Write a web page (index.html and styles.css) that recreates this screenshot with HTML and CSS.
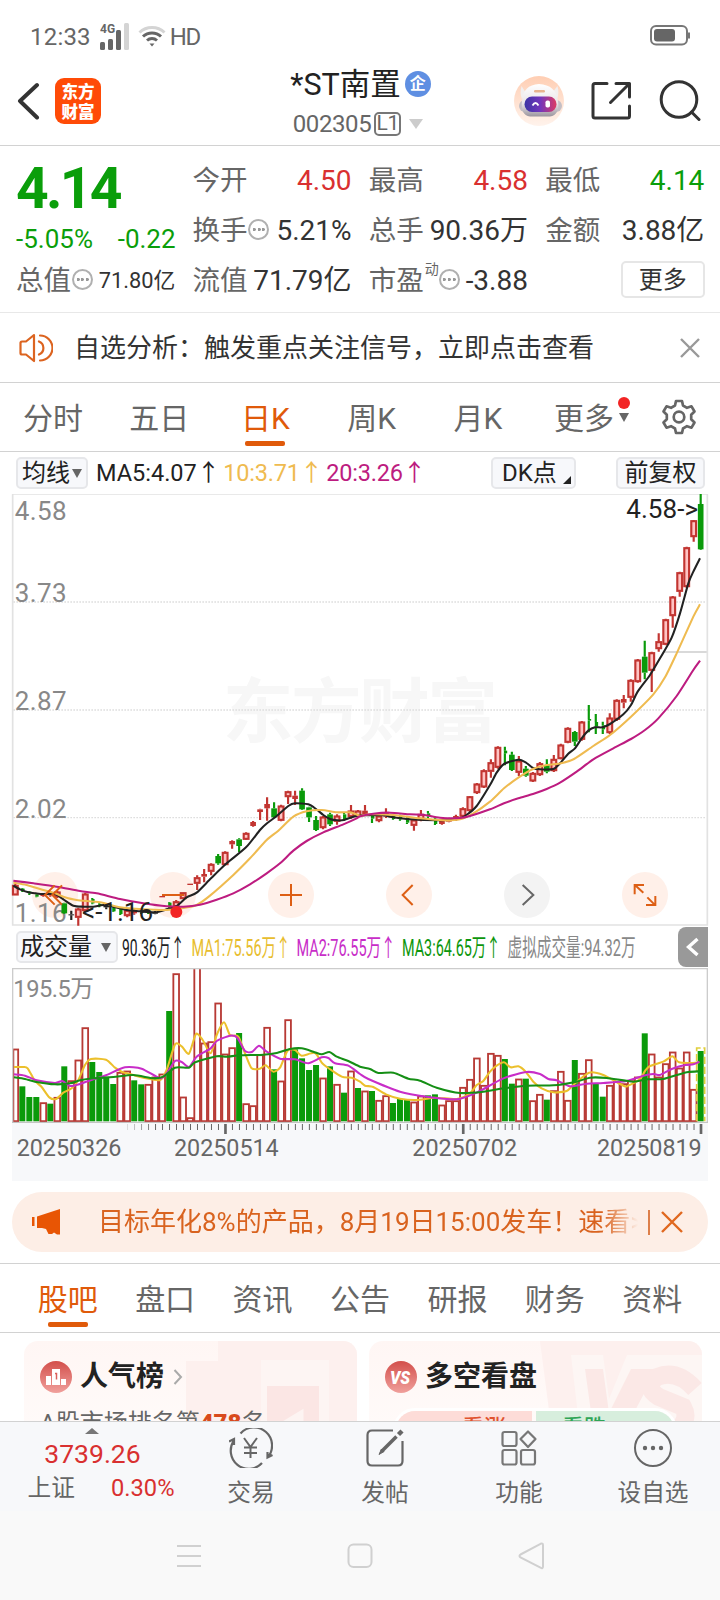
FILE: index.html
```html
<!DOCTYPE html>
<html lang="zh-CN">
<head>
<meta charset="utf-8">
<title>*ST南置 002305</title>
<link rel="stylesheet" href="styles.css">
</head>
<body>
<div class="phone">
  <div class="status">
    <span class="clock">12:33</span>
    <svg class="signal" width="30" height="30" viewBox="0 0 30 30"><text x="0" y="11" class="net">4G</text><g fill="#666"><rect x="0" y="20" width="5" height="8" rx="1.5"/><rect x="8" y="17" width="5" height="11" rx="1.5"/><rect x="16" y="8" width="5" height="20" rx="1.5"/><rect x="24" y="1" width="5" height="27" rx="1.5" fill="#d4d4d4"/></g></svg>
    <svg class="wifi" width="28" height="24" viewBox="0 0 28 24" fill="none" stroke="#666" stroke-width="3"><path d="M1.500 8.500A18 18 0 0 1 26.500 8.500" stroke="#d4d4d4"/><path d="M5 12.500A13 13 0 0 1 23 12.500"/><path d="M9 16.500A7.500 7.500 0 0 1 19 16.500"/><path d="M11.500 19.500h5L14 22.500z" fill="#666" stroke="none"/></svg>
    <span class="hd">HD</span>
    <svg class="battery" width="40" height="22" viewBox="0 0 40 22"><rect x="1" y="1" width="36" height="18.500" rx="5" fill="none" stroke="#777" stroke-width="2"/><rect x="4" y="4" width="21" height="12.500" rx="3" fill="#666"/><rect x="38" y="7.500" width="2" height="6" fill="#777"/></svg>
  </div>

  <header class="header">
    <svg class="back" width="24" height="38" viewBox="0 0 24 38"><path d="M20 3L3 19L20 35.500" fill="none" stroke="#333" stroke-width="4" stroke-linecap="round" stroke-linejoin="round"/></svg>
    <div class="logo"><span>东方</span><span>财富</span></div>
    <div class="title">
      <div class="name">*ST南置<i class="corp">企</i></div>
      <div class="code">002305<span class="level">L1</span><svg width="14" height="10" viewBox="0 0 14 10"><path d="M0 0h14L7 10z" fill="#ccc"/></svg></div>
    </div>
    <svg class="robot" width="50" height="50" viewBox="0 0 50 50">
      <defs>
        <linearGradient id="peach" x1="0" y1="0" x2="0" y2="1"><stop offset="0" stop-color="#ffceb3"/><stop offset="1" stop-color="#fff3ec"/></linearGradient>
        <linearGradient id="visor"><stop offset="0" stop-color="#3b35a5"/><stop offset=".5" stop-color="#7436bb"/><stop offset="1" stop-color="#dd3b64"/></linearGradient>
        <linearGradient id="shell" x1="0" y1="0" x2="0" y2="1"><stop offset="0" stop-color="#fff"/><stop offset=".6" stop-color="#e9e5e8"/><stop offset="1" stop-color="#9b959e"/></linearGradient>
      </defs>
      <circle cx="25" cy="25" r="25" fill="url(#peach)"/>
      <path d="M12 17L7.500 10Q5.500 18 8 23zM38 17L43.500 10Q45.500 18 43 23z" fill="#f2efef"/>
      <rect x="5" y="24" width="43" height="12" rx="6" fill="#c4bfc5"/>
      <path d="M8 25Q9 9 25 8Q42 9 44 25Q46 39 36 40.500H16Q6 39 8 25z" fill="url(#shell)"/>
      <rect x="20" y="14" width="11" height="2.500" rx="1.200" fill="#e8b48f"/>
      <rect x="10.500" y="20.500" width="32" height="15.500" rx="7.500" fill="url(#visor)"/>
      <path d="M18.500 29.500q3-5 6 0" fill="none" stroke="#fff" stroke-width="1.800"/><rect x="31.500" y="24.500" width="4.500" height="7" rx="1.800" fill="#fff"/>
    </svg>
    <svg class="share" width="42" height="42" viewBox="0 0 42 42" fill="none" stroke="#333" stroke-width="3" stroke-linecap="round" stroke-linejoin="round"><path d="M17 3.500H5Q3 3.500 3 5.500V36Q3 38 5 38H37.500Q39.500 38 39.500 36V26M26 3.500H39.500V17M39 4L20.500 22.500"/></svg>
    <svg class="search" width="42" height="42" viewBox="0 0 42 42" fill="none" stroke="#333" stroke-width="3" stroke-linecap="round"><circle cx="20" cy="19.500" r="17.800"/><path d="M32.500 32L40 39.500"/></svg>
  </header>

  <section class="quote">
    <div class="col first">
      <div class="price">4.14</div>
      <div class="change"><span>-5.05%</span><span>-0.22</span></div>
      <div class="kv small"><span>总值<i class="dots"></i></span><b>71.80亿</b></div>
    </div>
    <div class="col">
      <div class="kv"><span>今开</span><b class="up">4.50</b></div>
      <div class="kv"><span>换手<i class="dots"></i></span><b>5.21%</b></div>
      <div class="kv"><span>流值</span><b>71.79亿</b></div>
    </div>
    <div class="col">
      <div class="kv"><span>最高</span><b class="up">4.58</b></div>
      <div class="kv"><span>总手</span><b>90.36万</b></div>
      <div class="kv"><span>市盈<sup>动</sup><i class="dots"></i></span><b>-3.88</b></div>
    </div>
    <div class="col">
      <div class="kv"><span>最低</span><b class="down">4.14</b></div>
      <div class="kv"><span>金额</span><b>3.88亿</b></div>
      <div class="kv end"><button class="more">更多</button></div>
    </div>
  </section>

  <section class="notice">
    <svg width="36" height="30" viewBox="0 0 36 30" fill="none" stroke="#dc6420" stroke-width="2.200" stroke-linecap="round" stroke-linejoin="round"><path d="M17 2L9 8.500H5Q3.500 8.500 3.500 10V20Q3.500 21.500 5 21.500H9L17 28zM22 8.500A7 7 0 0 1 22 21.500M23 2.500A12.500 12.500 0 0 1 23 27.500"/></svg>
    <span>自选分析：触发重点关注信号，立即点击查看</span>
    <svg class="close" width="20" height="20" viewBox="0 0 20 20"><path d="M1 1L19 19M19 1L1 19" stroke="#999" stroke-width="2.400"/></svg>
  </section>

  <nav class="periods">
    <span>分时</span><span>五日</span><span class="on">日K</span><span>周K</span><span>月K</span>
    <span class="morep">更多<i class="caret"></i><i class="dot"></i></span>
    <svg width="36" height="36" viewBox="0 0 36 36" fill="none" stroke="#666" stroke-width="2.700" stroke-linejoin="round"><path d="M15 2H21L22 6.500L26 8.800L30.500 7.300L33.500 12.500L30.200 15.800V20.200L33.500 23.500L30.500 28.700L26 27.200L22 29.500L21 34H15L14 29.500L10 27.200L5.500 28.700L2.500 23.500L5.800 20.200V15.800L2.500 12.500L5.500 7.300L10 8.800L14 6.500Z"/><circle cx="18" cy="18" r="5.300"/></svg>
  </nav>

  <div class="legend">
    <span class="chip ma">均线<i></i></span>
    <span class="m5">MA5:4.07<em>↑</em></span>
    <span class="m10">10:3.71<em>↑</em></span>
    <span class="m20">20:3.26<em>↑</em></span>
    <span class="chip dk">DK点<i></i></span>
    <span class="chip fq">前复权</span>
  </div>
  <svg class="kline" viewBox="0 42 2160 1296" id="kline"></svg>
  <div class="vlegend">
    <span class="chip vol">成交量<i></i></span>
    <svg width="520" height="42" viewBox="0 0 520 42" class="vtext">
      <text transform="translate(4 29.500) scale(.578 1)" fill="#222">90.36万↑</text>
      <text transform="translate(73.500 29.500) scale(.603 1)" fill="#e8bd2e">MA1:75.56万↑</text>
      <text transform="translate(178.500 29.500) scale(.603 1)" fill="#c82dc8">MA2:76.55万↑</text>
      <text transform="translate(284 29.500) scale(.6 1)" fill="#0c960c">MA3:64.65万↑</text>
      <text transform="translate(389.500 29.500) scale(.61 1)" fill="#888">虚拟成交量:94.32万</text>
    </svg>
    <span class="fold"><svg width="14" height="20" viewBox="0 0 14 20"><path d="M11.500 2L2.500 10L11.500 18" fill="none" stroke="#fff" stroke-width="3.400"/></svg></span>
  </div>
  <svg class="volume" viewBox="0 129 2160 639" id="volume"></svg>

  <div class="promo">
    <svg width="32" height="28" viewBox="0 0 32 28" fill="#e85504"><rect x="0" y="9" width="2.500" height="9"/><path d="M5 8.500L28 1V26.500H25L22 24.500L20 26H16.500L14 21L10 20H5z"/></svg>
    <span class="ptext">目标年化8%的产品，8月19日15:00发车！速看&gt;</span>
    <i class="bar"></i>
    <svg width="22" height="22" viewBox="0 0 22 22"><path d="M1 1L21 21M21 1L1 21" stroke="#e0681f" stroke-width="2.400"/></svg>
  </div>

  <nav class="tabs"><span class="on">股吧</span><span>盘口</span><span>资讯</span><span>公告</span><span>研报</span><span>财务</span><span>资料</span></nav>

  <section class="cards">
    <div class="card">
      <svg class="deco" width="333" height="100" viewBox="0 0 333 100"><path d="M194 0H333V100H162V20H194z" fill="#fdf0ee"/><path d="M237 19H305V100H199V84H237z" fill="#fdf5f3"/><path d="M243 45H295V100H207V86H243z" fill="#fbe6e4"/><path d="M256 86L276 74V100" fill="none" stroke="#fdf4f2" stroke-width="7"/></svg>
      <div class="chead"><svg width="32" height="32" viewBox="0 0 32 32"><circle cx="16" cy="16" r="16" fill="url(#red)"/><path d="M6 15h5v9H6zM12 8h8v16h-8zM21 18h5v6h-5z" fill="#fff"/><path d="M15 12.500h1.500v6" stroke="#d9605c" stroke-width="1.500" fill="none"/></svg>人气榜<svg class="chev" width="10" height="16" viewBox="0 0 10 16"><path d="M1.500 1L8 8L1.500 15" fill="none" stroke="#aaa" stroke-width="2"/></svg></div>
      <div class="rank">A股市场排名第<b>478</b>名</div>
    </div>
    <div class="card">
      <svg class="deco" width="333" height="100" viewBox="0 0 333 100"><path d="M171 0H333V100H184z" fill="#fdf0ee"/><path d="M202 14H234L240 58L258 14H333V100H212z" fill="#fdf6f4"/><path d="M216 28H234L240 72L262 28H288L250 100H226z" fill="#fbe8e6"/><path d="M326 48Q308 28 288 36Q274 46 290 56L314 66Q322 80 304 92" fill="none" stroke="#fbe8e6" stroke-width="18"/></svg>
      <div class="chead"><svg width="32" height="32" viewBox="0 0 32 32"><defs><linearGradient id="red" x1="0" y1="0" x2="0" y2="1"><stop offset="0" stop-color="#d34f4b"/><stop offset="1" stop-color="#f0a09c"/></linearGradient></defs><circle cx="16" cy="16" r="16" fill="url(#red)"/><text transform="translate(15 23) scale(.85 1)" text-anchor="middle" class="vs">VS</text></svg>多空看盘</div>
      <div class="vote"><span class="bull">看涨</span><span class="bear">看跌</span></div>
    </div>
  </section>

  <footer class="bottom">
    <div class="index">
      <svg width="14" height="6" viewBox="0 0 14 6"><path d="M7 0L14 6H0z" fill="#777"/></svg>
      <div class="ival">3739.26</div>
      <div class="irow"><span>上证</span><b>0.30%</b></div>
    </div>
    <div class="act"><svg width="44" height="40" viewBox="0 0 44 40" fill="none" stroke="#666" stroke-width="2.200"><path d="M11.500 5.500A18 18 0 0 1 38.500 29.500M43.500 27L38.500 29.500V24"/><path d="M33 35A18 18 0 0 1 5 12.500M0 13.500L5 11V17"/><path d="M15 10L21.500 19L28 10M21.500 19V30M15 19.500H28M15 25H28" stroke-width="2"/></svg>交易</div>
    <div class="act"><svg width="40" height="40" viewBox="0 0 40 40" fill="none" stroke="#666" stroke-width="2.200"><path d="M28 2.500H7Q2.500 2.500 2.500 7V33Q2.500 37.500 7 37.500H33Q37.500 37.500 37.500 33V13"/><path d="M16.500 23.500L31.500 8.500" stroke-width="3.600"/><path d="M33.500 6.500L37 3" stroke-width="4.500"/><path d="M14 26.500L19 23.500L16.500 21z" fill="#666" stroke-width="1"/></svg>发帖</div>
    <div class="act"><svg width="40" height="40" viewBox="0 0 40 40" fill="none" stroke="#777" stroke-width="2.200" stroke-linejoin="round"><rect x="3.500" y="4" width="14" height="14" rx="2"/><rect x="3.500" y="22" width="14" height="14.500" rx="2"/><rect x="22" y="22" width="14" height="14.500" rx="2"/><path d="M29 3.500L36.500 11L29 19L21.500 11z"/></svg>功能</div>
    <div class="act"><svg width="40" height="40" viewBox="0 0 40 40" fill="none" stroke="#666" stroke-width="2"><circle cx="20" cy="20" r="18"/><g fill="#666" stroke="none"><circle cx="12" cy="20" r="2.200"/><circle cx="20" cy="20" r="2.200"/><circle cx="28" cy="20" r="2.200"/></g></svg>设自选</div>
  </footer>
  <div class="sysnav">
    <svg width="26" height="28" viewBox="0 0 26 28"><path d="M1 4H25M1 14H25M1 24H25" stroke="#d0d0d0" stroke-width="2"/></svg>
    <svg width="26" height="28" viewBox="0 0 26 28"><rect x="1.500" y="2.500" width="23" height="22.500" rx="5" fill="none" stroke="#d0d0d0" stroke-width="2"/></svg>
    <svg width="28" height="28" viewBox="0 0 28 28"><path d="M2.500 12.500L22.500 1.800Q25 1 25 3V24.500Q25 27 22.500 25.700L2.500 15.500Q0.500 14 2.500 12.500z" fill="none" stroke="#d0d0d0" stroke-width="2"/></svg>
  </div>
</div>
<script src="chart.js"></script>
</body>
</html>
```
FILE: styles.css
```css
* { box-sizing: border-box; }
body { margin: 0; background: #fff; color: #222; font-family: Roboto, "Noto Sans CJK SC", sans-serif; line-height: 1; }
.phone { width: 720px; height: 1600px; overflow: hidden; display: flex; flex-direction: column; white-space: nowrap; }
.phone > * { flex: none; }
i, em { font-style: normal; }
svg { display: block; flex: none; }

.status { height: 62px; padding: 12px 30px 0; display: flex; align-items: center; color: #666; font-size: 24px; }
.clock { letter-spacing: .2px; }
.signal { margin-left: 9px; }
.net { font: 700 12px Roboto, sans-serif; fill: #666; }
.wifi { margin: -2px 0 0 8px; }
.hd { margin-left: 4px; font-size: 24px; letter-spacing: -1.300px; }
.battery { margin: -3px 0 0 auto; }

.header { height: 84px; border-bottom: 1px solid #d2d2d2; display: flex; align-items: center; padding: 0 20px 0 17px; }
.back { margin-top: -6px; }
.logo { width: 46px; height: 46px; margin: -6px 0 0 14px; border-radius: 9px; background: #ff4b07; color: #fff; font: 900 16.500px/20px "Noto Sans CJK SC", sans-serif; display: flex; flex-direction: column; justify-content: center; align-items: center; }
.title { width: 414px; display: flex; flex-direction: column; align-items: center; gap: 6px; padding: 0 0 4px 98px; }
.name { display: flex; align-items: center; font-size: 30.500px; height: 38px; margin-left: 7px; }
.corp { width: 26px; height: 26px; margin: 0 0 3px 4px; border-radius: 50%; background: #5f8fe2; color: #fff; font-size: 16px; font-weight: 700; display: flex; align-items: center; justify-content: center; }
.code { display: flex; align-items: center; font-size: 24px; height: 26px; color: #666; margin-left: 2px; letter-spacing: -.4px; }
.level { border: 2px solid #777; border-radius: 5px; height: 24px; width: 27px; font-size: 21px; display: flex; align-items: center; justify-content: center; margin: 0 8px 0 3px; }
.robot { margin-top: -6px; margin-left: -1px; }
.share { margin: -6px 0 0 26px; }
.search { margin: -6px -4px 0 27px; }

.quote { height: 167px; border-bottom: 1px solid #e8e8e8; display: grid; grid-template-columns: repeat(4, 158.600px); gap: 17.800px; padding: 10px 16px 0; }
.kv { height: 50px; display: flex; justify-content: space-between; align-items: center; font-size: 28px; color: #666; }
.kv span { display: flex; align-items: center; font-size: 27.500px; }
.kv b { font-weight: 400; color: #333; margin-right: -.6px; }
.kv .up { color: #d93030; }
.kv .down, .price, .change { color: #0a9e0a; }
.kv.end { justify-content: flex-end; }
.kv.small b { font-size: 21.800px; }
.kv sup { font-size: 14px; align-self: flex-start; margin: -5px -1px 0 1px; line-height: 1; }
.dots { width: 21px; height: 21px; margin: -3px 0 0 1px; border: 2px solid #b0b0b0; border-radius: 50%; background: radial-gradient(circle, #999 1.3px, transparent 1.8px) 50% 50% / 4.6px 15px no-repeat, radial-gradient(circle, #999 1.3px, transparent 1.8px) 1.5px 50% / 4.6px 15px no-repeat, radial-gradient(circle, #999 1.3px, transparent 1.8px) 11px 50% / 4.6px 15px no-repeat; }
.price { font-size: 57px; font-weight: 700; height: 66px; line-height: 68px; letter-spacing: -2.700px; margin-top: -1px; }
.change { height: 34px; display: flex; justify-content: space-between; align-items: center; font-size: 26px; margin: 1px -1px 0 0; }
.more { width: 84px; height: 37px; border: 2px solid #e6e6e6; border-radius: 5px; background: #fff; font: 24px/28px "Noto Sans CJK SC", sans-serif; padding: 0 0 3px; color: #333; margin: -3px -1px 0 0; }

.notice { height: 70px; border-bottom: 1px solid #d2d2d2; display: flex; align-items: center; padding: 0 20px 0 17px; font-size: 26px; color: #333; }
.notice span { margin-left: 21px; }
.close { margin-left: auto; }

.periods { height: 69px; border-bottom: 1px solid #d2d2d2; display: flex; align-items: center; font-size: 30px; color: #666; }
.periods span { width: 106.200px; height: 68px; display: flex; align-items: center; justify-content: center; position: relative; padding-top: 3px; }
.periods svg { margin-left: 24px; }
.periods .on, .tabs .on { color: #e05a0a; }
.on::after { content: ""; position: absolute; bottom: 5px; left: 50%; width: 40px; height: 5px; margin-left: -20px; border-radius: 2px; background: #e05a0a; }
.morep .caret { position: absolute; right: 8px; top: 30px; border: 5px solid transparent; border-top: 9px solid #666; border-bottom: 0; }
.morep .dot { position: absolute; right: 7px; top: 14px; width: 12px; height: 12px; border-radius: 50%; background: #f22424; }

.legend { height: 42px; display: flex; align-items: center; padding: 0 15px 0 16px; font-size: 23.500px; }
.legend em { font-family: "Noto Sans CJK SC", sans-serif; margin: 0 -1px 0 0; }
.chip { height: 32px; border: 2px solid #e6e7ea; border-radius: 5px; background: #f7f8fb; display: flex; align-items: center; font-size: 24px; color: #222; }
.ma { width: 72px; padding-left: 4px; margin-right: 8px; }
.ma i, .vol i { border: 5px solid transparent; border-top: 9px solid #666; border-bottom: 0; margin-left: 2px; }
.m10 { color: #efbb50; margin-left: 4px; letter-spacing: -.2px; }
.m20 { color: #bd1c80; margin-left: 4px; letter-spacing: -.2px; }
.dk { width: 85px; padding-left: 9px; margin-left: auto; position: relative; }
.dk i { position: absolute; right: 3px; bottom: 3px; border-left: 8px solid transparent; border-bottom: 8px solid #222; }
.fq { width: 89px; margin-left: 40px; justify-content: center; }

.kline { width: 720px; height: 432px; }
.kline text, .volume text { font-family: Roboto, "Noto Sans CJK SC", sans-serif; font-size: 78px; }
.kline .mark { font: 700 212px "Noto Sans CJK SC", sans-serif; }
.volume .top { font-size: 71px; }
.volume .date { font-size: 70px; }
.vlegend { height: 42px; display: flex; align-items: center; padding: 0 12px 0 16px; }
.vol { width: 102px; padding-left: 2px; }
.vol i { margin-left: 9px; }
.vtext { font-size: 24px; }
.fold { width: 30px; height: 40px; margin-left: auto; background: #999; border-radius: 8px 0 0 8px; display: flex; align-items: center; justify-content: center; }
.volume { width: 720px; height: 213px; }

.promo { height: 60px; margin: 11px 12px 0; border-radius: 30px; background: #fdeee6; display: flex; align-items: center; padding: 0 25px 0 20px; font-size: 26px; color: #d9631f; }
.ptext { margin-left: 34px; width: 542px; overflow: hidden; line-height: 40px; -webkit-mask-image: linear-gradient(90deg, #000 505px, transparent 540px); }
.bar { width: 2px; height: 25px; background: #dd7f4a; margin: 0 11px 0 9px; }

.tabs { height: 70px; margin-top: 11px; border-top: 1px solid #d2d2d2; border-bottom: 1px solid #d2d2d2; display: flex; padding: 0 19px; font-size: 30px; color: #666; }
.tabs span { width: 97.500px; display: flex; align-items: center; justify-content: center; position: relative; padding-top: 3px; }

.cards { height: 88px; padding: 8px 18px 0 24px; display: flex; gap: 12px; overflow: hidden; }
.card { width: 333px; height: 100px; border-radius: 14px; background: linear-gradient(#fff6f4, #fffbfa); padding: 20px 16px 0; position: relative; overflow: hidden; flex: none; }
.deco { position: absolute; left: 0; top: 0; }
.chead { position: relative; display: flex; align-items: center; height: 32px; gap: 8px; font-size: 28px; font-weight: 700; color: #222; }
.chev { margin-left: 1px; }
.vs { font: italic 900 19px Roboto, sans-serif; fill: #fff; }
.rank { position: relative; margin-top: 18px; font-size: 24px; color: #666; }
.rank b { color: #d94a1c; font-weight: 900; }
.vote { position: relative; display: flex; gap: 4px; height: 44px; margin: 15px 9px 0 8px; border: 3px solid #fff; border-radius: 22px; overflow: hidden; font-size: 22px; font-weight: 500; line-height: 24px; }
.vote span { flex: 1; padding-top: 5px; text-align: center; }
.bull { background: #fddcd8; color: #e0532f; padding-left: 40px; }
.bear { background: #d7eedd; color: #2fa556; padding-right: 42px; }

.bottom { height: 90px; background: #f7f8fa; border-top: 1px solid #d2d2d2; display: flex; font-size: 23.700px; color: #666; }
.index { width: 184px; display: flex; flex-direction: column; align-items: center; padding-top: 6px; }
.ival { font-size: 26.500px; color: #d93030; margin: 5px 0 0 1px; height: 30px; line-height: 30px; }
.irow { display: flex; justify-content: space-between; align-items: center; width: 147px; height: 30px; margin: 5px 0 0 18px; }
.irow b { font-weight: 400; color: #d93030; font-size: 23.700px; }
.act { width: 134px; display: flex; flex-direction: column; align-items: center; padding-top: 6px; gap: 14px; }
.sysnav { height: 89px; background: #f9f9f9; display: flex; justify-content: space-between; align-items: center; padding: 0 174px 0 176px; }
```
FILE: chart.js
```js
// Builds the candlestick chart and the volume chart as SVG markup.
const RED = '#c23531', GREEN = '#0a9a0a', BLACK = '#222';
const X0 = 46, STEP = 20.98;
const cx = i => X0 + i * STEP;

// [bodyTop, bodyBottom, wickTop, wickBottom, colour]
const C = [
[1216,1245,1212,1245,'r'],[1226,1232,1224,1236,'g'],[1235,1240,1233,1245,'g'],[1243,1250,1240,1252,'g'],[1242,1248,1240,1250,'r'],[1240,1246,1234,1250,'r'],[1236,1250,1232,1254,'r'],
[1270,1300,1268,1302,'g'],[1303,1306,1292,1320,'k'],[1287,1312,1283,1337,'r'],[1242,1292,1238,1296,'r'],[1257,1270,1254,1273,'g'],[1272,1278,1270,1282,'g'],[1278,1282,1274,1288,'k'],[1280,1294,1276,1296,'g'],[1286,1302,1284,1305,'g'],
[1291,1307,1285,1312,'r'],[1292,1300,1288,1304,'r'],[1292,1298,1288,1302,'g'],[1292,1299,1288,1302,'g'],[1297,1301,1293,1303,'k'],[1248,1252,1248,1252,'r'],[1268,1280,1266,1284,'g'],[1265,1280,1260,1284,'r'],[1238,1256,1238,1256,'r'],
[1211,1215,1211,1215,'r'],[1193,1210,1186,1230,'r'],[1182,1190,1167,1207,'r'],[1153,1174,1150,1186,'r'],[1128,1150,1122,1154,'g'],[1117,1154,1114,1156,'r'],[1083,1093,1081,1106,'r'],[1078,1098,1075,1116,'g'],[1060,1078,1057,1080,'r'],
[1026,1038,1023,1040,'r'],[988,996,986,1020,'r'],[972,985,952,1022,'r'],[985,1012,967,1014,'g'],[978,1021,974,1024,'r'],[935,950,932,972,'r'],[947,957,932,975,'r'],[932,988,925,990,'g'],[982,1012,980,1026,'g'],[1020,1050,1008,1053,'g'],
[1011,1043,1008,1048,'r'],[1003,1033,998,1038,'g'],[1008,1024,1003,1034,'r'],[1003,1018,998,1022,'g'],[993,1010,975,1016,'r'],[993,1010,990,1014,'r'],[992,1002,975,1005,'r'],[1004,1016,1002,1029,'g'],[1008,1022,1005,1027,'r'],[999,1010,985,1014,'r'],
[1005,1017,1002,1019,'g'],[1008,1018,1004,1022,'g'],[1012,1028,1008,1032,'g'],[1020,1036,1016,1052,'r'],[1003,1020,990,1024,'r'],[1000,1010,993,1020,'g'],[1016,1032,1012,1035,'g'],[1022,1032,1018,1034,'r'],[1018,1025,1014,1027,'r'],[1008,1020,1004,1022,'r'],
[986,1009,982,1012,'r'],[950,992,948,996,'r'],[912,938,909,942,'r'],[872,921,868,924,'r'],[848,874,838,893,'r'],[802,862,799,866,'r'],[812,820,800,856,'g'],[824,870,815,873,'g'],[843,877,828,888,'r'],[866,887,858,890,'g'],
[880,903,876,906,'r'],[851,884,846,888,'r'],[855,875,838,880,'g'],[838,872,825,876,'r'],[795,836,791,838,'r'],[745,787,742,790,'r'],[756,785,753,798,'g'],[726,778,723,782,'r'],[717,722,675,757,'g'],[726,740,702,762,'g'],[736,748,725,762,'g'],
[714,758,700,762,'r'],[661,718,658,723,'r'],[657,668,645,685,'r'],[601,652,598,665,'r'],[540,605,537,608,'r'],[530,578,482,598,'g'],[518,571,515,636,'r'],[485,506,460,515,'r'],[419,493,416,496,'r'],[351,407,348,443,'r'],[278,334,275,350,'r'],[203,320,200,324,'r'],[122,170,120,185,'r'],[72,208,42,210,'g']];

// [top, colour]
const V = [[371,'r'],[484,'g'],[516,'g'],[516,'g'],[532,'r'],[536,'g'],[516,'r'],[424,'g'],[466,'r'],[404,'r'],[307,'r'],[411,'g'],[441,'g'],[455,'g'],[477,'g'],[441,'r'],[437,'r'],[466,'g'],[478,'g'],[477,'r'],[455,'r'],[446,'r'],[258,'g'],[145,'r'],[515,'r'],[577,'r'],[100,'r'],[353,'r'],[349,'r'],[233,'r'],[386,'r'],[367,'r'],[324,'g'],[535,'r'],[541,'r'],[388,'r'],[306,'r'],[433,'g'],[467,'r'],[283,'r'],[373,'g'],[400,'g'],[435,'g'],[420,'g'],[458,'r'],[424,'g'],[477,'r'],[503,'g'],[437,'r'],[489,'g'],
[497,'r'],[498,'g'],[525,'r'],[511,'r'],[534,'g'],[522,'g'],[523,'g'],[530,'r'],[512,'r'],[511,'g'],[508,'g'],[539,'r'],[526,'r'],[526,'r'],[486,'r'],[462,'r'],[398,'r'],[480,'r'],[384,'r'],[390,'r'],[402,'g'],[476,'g'],[461,'r'],[461,'g'],[526,'r'],[507,'r'],[524,'g'],[496,'r'],[438,'r'],[525,'r'],[405,'g'],[444,'r'],[403,'r'],[476,'g'],[515,'g'],[480,'r'],[468,'r'],[475,'r'],[466,'r'],[455,'r'],[325,'g'],[386,'r'],[455,'r'],[415,'r'],[380,'r'],[428,'r'],[380,'r'],[492,'r'],[378,'g']];

const R = (pts) => pts.trim().split(/\s+/).map(p => p.split(',').map(Number));
// Joins a left half and a right half (offset 1080) into one smoothed path.
function curve(left, right, color) {
  const p = R(left).concat(R(right).map(([x, y]) => [x + 1080, y]));
  let d = `M${p[0]}`;
  for (let i = 0; i < p.length - 1; i++) {
    const a = p[i - 1] || p[i], b = p[i], c = p[i + 1], e = p[i + 2] || c, k = 0.12;
    d += `C${b[0] + (c[0] - a[0]) * k},${b[1] + (c[1] - a[1]) * k} ${c[0] - (e[0] - b[0]) * k},${c[1] - (e[1] - b[1]) * k} ${c}`;
  }
  return `<path d="${d}" fill="none" stroke="${color}" stroke-width="6.200" stroke-linejoin="round"/>`;
}

let k = '';
k += `<text class="mark" x="668" y="772" fill="#f7f7f7" textLength="826">东方财富</text>`;
for (const y of [366, 690, 1013]) k += `<path d="M40 ${y}H2118" stroke="#dedede" stroke-width="4" stroke-dasharray="5 4"/>`;
[165, 519, 873, 1227, 1581, 1935].forEach((x, i) => k += `<circle cx="${x}" cy="1245" r="69" fill="${i === 4 ? '#f3f3f3' : '#fff0e9'}"/>`);
k += `<path d="M38 42H2122V1335H38z" fill="none" stroke="#e2e2e2" stroke-width="5"/>`;
[[4.58,121],[3.73,366],[2.87,690],[2.02,1013],[1.16,1325]].forEach(([t, y]) => k += `<text x="44" y="${y}" fill="#888" textLength="156">${t.toFixed(2)}</text>`);
k += `<path d="M1990 516H2120" stroke="#ccc" stroke-width="5"/>`;
C.forEach(([t, b, h, l, c], i) => {
  const x = cx(i), col = c === 'r' ? RED : c === 'g' ? GREEN : BLACK;
  k += `<path d="M${x} ${h}V${t}M${x} ${b}V${l}" stroke="${col}" stroke-width="6.500"/>`;
  if (c === 'r' && b - t > 13) k += `<rect x="${x - 7.2}" y="${t + 1.5}" width="14.400" height="${b - t - 3}" fill="#ffc4c4" stroke="${col}" stroke-width="6.400"/>`;
  else { const w = c === 'g' && b - t < 20 ? 5 : 8.5; k += `<rect x="${x - w + (w === 5 ? 2 : 0)}" y="${t}" width="${w * 2}" height="${b - t}" fill="${col}"/>`; }
});
k += curve('40,1217 60,1228 85,1237 108,1240 130,1242 165,1242 190,1258 220,1277 250,1280 280,1280 310,1275 340,1280 380,1290 420,1294 465,1297 500,1288 530,1278 560,1252 590,1238 633,1195 680,1150 738,1102 780,1050 801,1030 830,1008 865,978 885,970 925,973 948,987 970,1005 990,1017 1011,1021 1032,1020 1060,1010 1080,1006', '30,1006 70,1006 100,1012 150,1018 230,1021 290,1018 315,1008 350,978 390,915 410,878 432,852 475,839 497,847 519,864 540,868 580,867 600,850 624,822 645,805 665,775 685,752 705,742 727,742 750,732 790,703 813,675 833,635 870,585 900,535 935,473 960,400 985,310 1000,275 1020,235', '#222');
k += curve('40,1208 80,1215 130,1230 165,1240 190,1250 230,1260 300,1267 360,1282 430,1288 500,1290 550,1284 590,1275 630,1247 700,1185 750,1135 800,1080 835,1052 880,1010 920,994 965,990 1010,997 1050,997 1080,1007', '30,1003 100,1005 180,1015 250,1021 300,1018 340,1000 390,965 432,925 475,893 519,867 560,855 603,850 642,837 700,798 750,765 813,710 880,643 915,592 950,520 1000,410 1020,373', '#efbb50');
k += curve('40,1202 100,1210 170,1220 240,1233 290,1240 360,1257 430,1270 500,1279 550,1280 600,1274 650,1259 700,1240 750,1213 800,1180 840,1150 880,1112 920,1083 970,1057 1030,1033 1070,1015', '0,1009 40,1001 90,998 150,1003 190,1004 240,1013 300,1014 330,1008 390,988 432,970 475,955 519,942 560,927 600,908 650,875 700,838 760,805 813,777 855,750 895,715 950,648 1000,570 1020,542', '#bd1c80');
k += `<text x="1879" y="113" fill="#222" textLength="215">4.58-&gt;</text><text x="246" y="1322" fill="#222" textLength="213">&lt;-1.16</text>`;
k += `<circle cx="529" cy="1296" r="18" fill="#f22424"/>`;
k += `<g fill="none" stroke="#dd5f15" stroke-width="6"><path d="M164 1216L135 1245L164 1274M186 1216L157 1245L186 1274M486 1245H552M840 1245H906M873 1212V1278"/><path d="M1238 1215L1208 1245L1238 1275M1930 1238L1904 1214M1904 1243V1215H1932M1942 1252L1966 1276M1966 1248V1275H1938"/><path d="M1568 1215L1600 1245L1568 1275" stroke="#666"/></g>`;
document.getElementById('kline').innerHTML = k;

let v = `<rect x="36" y="594" width="2088" height="174" fill="#f7f8fa"/>`;
v += `<text class="top" x="40" y="216" fill="#888" textLength="242">195.5万</text>`;
V.forEach(([t, c], i) => {
  const x = cx(i);
  const left = Math.max(x - 8.5, 40);
  if (c === 'r') v += `<rect x="${left}" y="${t + 2.5}" width="${x + 8.5 - left}" height="${586 - t}" fill="#fff" stroke="#b83a35" stroke-width="5.500"/>`;
  else v += `<rect x="${x - 9}" y="${t}" width="18" height="${589 - t}" fill="${GREEN}"/>`;
});
v += `<path d="M2090 589V369H2114V589" fill="none" stroke="#e0cf3c" stroke-width="5" stroke-dasharray="22 8"/>`;
v += curve('42,426 70,426 83,430 105,468 125,486 148,517 168,522 190,503 215,490 235,465 255,420 273,402 318,404 345,428 365,440 400,450 430,458 480,465 500,435 525,358 545,364 567,386 588,327 608,345 632,385 650,330 672,292 690,330 715,335 735,385 755,430 780,431 797,421 820,440 840,428 862,378 885,375 905,392 945,384 970,418 1025,455 1055,458 1080,470', '15,482 40,486 78,508 120,521 170,525 225,518 290,522 330,505 350,480 370,468 390,440 410,422 432,412 452,427 475,424 497,440 520,470 545,490 580,502 620,498 640,480 687,443 730,450 792,483 805,482 840,462 855,438 870,423 910,410 937,394 957,412 990,414 1018,412', '#ecc02c');
v += curve('42,448 75,452 110,466 165,474 187,468 210,483 240,477 280,463 320,450 375,427 425,431 480,460 500,445 525,408 545,411 567,426 590,395 632,370 650,348 690,332 712,338 735,378 757,380 777,362 800,380 840,401 885,403 925,415 965,397 985,399 1005,415 1045,422 1080,447', '25,462 120,500 200,515 290,523 350,503 430,460 500,441 540,447 565,462 590,466 630,484 680,476 730,474 800,468 850,452 880,447 900,450 935,432 975,420 1000,418 1018,410', '#c82dc8');
v += curve('42,457 75,462 105,470 165,478 210,475 240,466 280,460 340,456 400,450 460,460 490,455 525,428 567,428 585,412 650,394 680,395 720,391 790,389 830,384 870,372 905,370 940,380 965,388 988,381 1010,395 1045,408 1080,425', '30,432 55,444 100,443 145,461 180,467 230,488 300,504 370,500 430,490 500,482 580,481 650,470 690,458 740,459 820,470 860,463 910,462 950,450 985,441 1018,439', '#158f15');
v += `<path d="M38 592V131H2122V592" fill="none" stroke="#ccc" stroke-width="4"/><path d="M36 592H2124" stroke="#b9b9b9" stroke-width="3"/>`;
for (let i = 16; i < 99; i++) {
  const big = i === 30 || i === 64 || i === 98;
  v += `<path d="M${cx(i) + 1} 597V${big ? 627 : 615}" stroke="#666" stroke-width="${big ? 8 : 3}" opacity="${Math.min(1, (i - 15) * .2)}"/>`;
}
[[50,'20250326'],[522,'20250514'],[1237,'20250702'],[1791,'20250819']].forEach(([x, t]) => v += `<text class="date" x="${x}" y="692" fill="#666" textLength="314">${t}</text>`);
document.getElementById('volume').innerHTML = v;
```
